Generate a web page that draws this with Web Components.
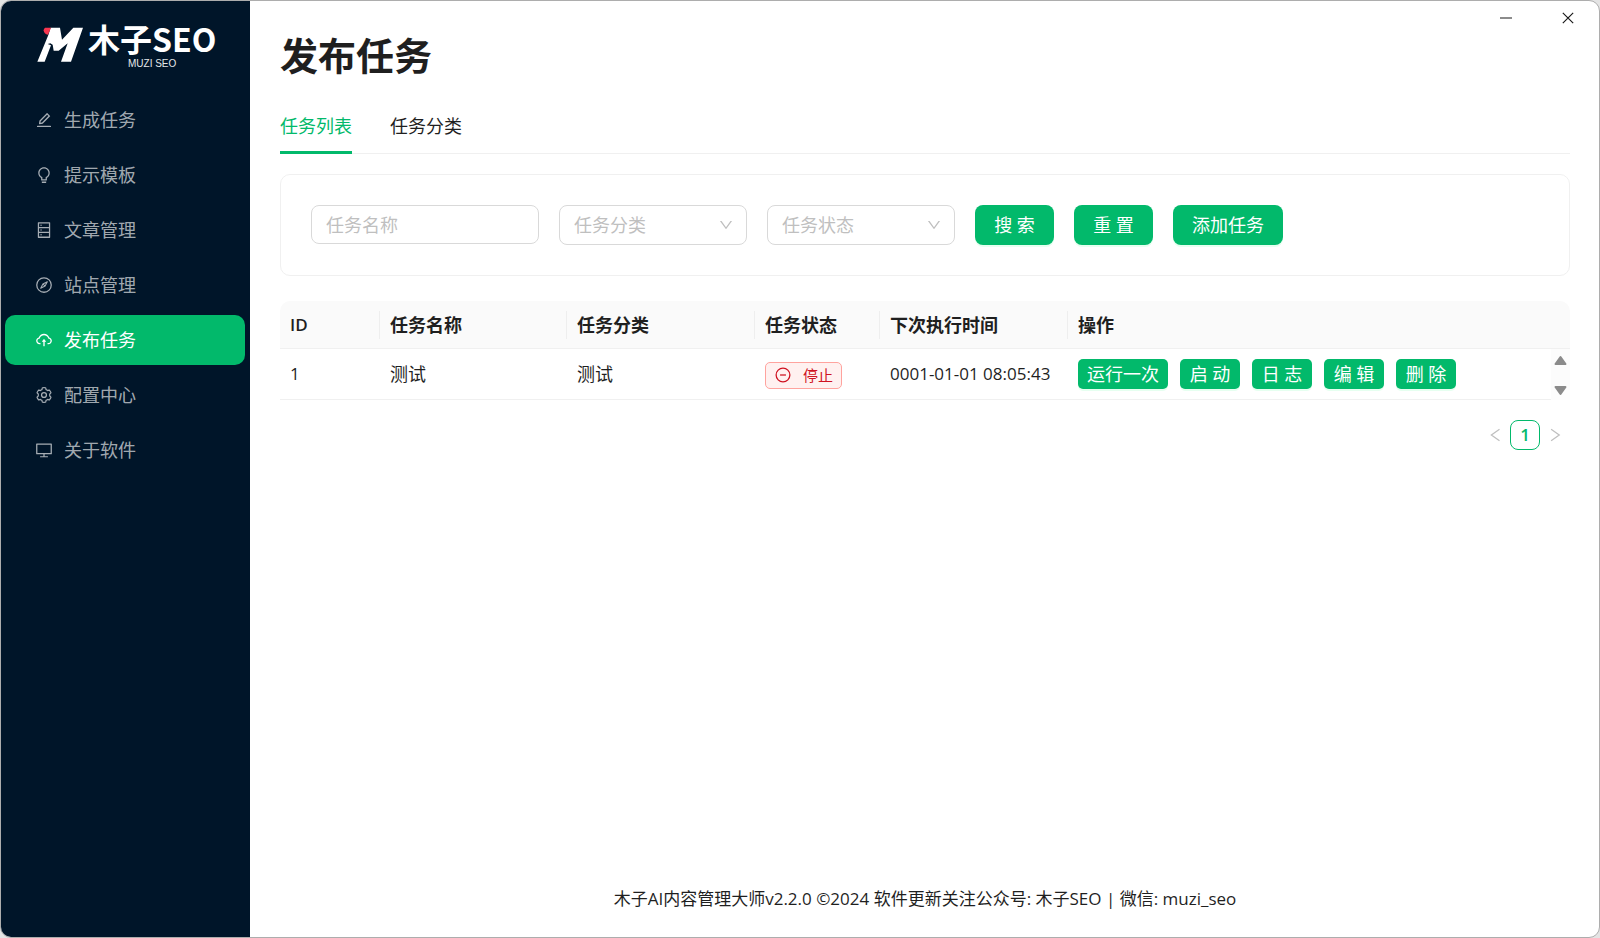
<!DOCTYPE html>
<html lang="zh-CN">
<head>
<meta charset="utf-8">
<title>发布任务</title>
<style>
  html, body { height: 100%; }
  body {
    margin: 0;
    background: #e4e4e4;
    font-family: "Open Sans", "Noto Sans CJK SC", sans-serif;
    font-size: 18px;
    line-height: 28px;
    color: #1f1f1f;
    --primary: #02b96b;
    --line: #f0f0f0;
    --field-line: #d9d9d9;
    --hint: #bfbfbf;
    --latin-size: 17px;
  }
</style>
</head>
<body>
<mz-window>
  <mz-sidebar slot="side">
    <mz-menu-item icon="edit">生成任务</mz-menu-item>
    <mz-menu-item icon="bulb">提示模板</mz-menu-item>
    <mz-menu-item icon="database">文章管理</mz-menu-item>
    <mz-menu-item icon="compass">站点管理</mz-menu-item>
    <mz-menu-item icon="upload" active>发布任务</mz-menu-item>
    <mz-menu-item icon="setting">配置中心</mz-menu-item>
    <mz-menu-item icon="desktop">关于软件</mz-menu-item>
  </mz-sidebar>
  <mz-title>发布任务</mz-title>
  <mz-tabs>
    <mz-tab active>任务列表</mz-tab>
    <mz-tab>任务分类</mz-tab>
  </mz-tabs>
  <mz-filter-card>
    <mz-input label="任务名称"></mz-input>
    <mz-select label="任务分类"></mz-select>
    <mz-select label="任务状态"></mz-select>
    <mz-button>搜 索</mz-button>
    <mz-button>重 置</mz-button>
    <mz-button>添加任务</mz-button>
  </mz-filter-card>
  <mz-task-table></mz-task-table>
  <mz-pagination></mz-pagination>
  <mz-footer slot="footer">木子AI内容管理大师v2.2.0 ©2024 软件更新关注公众号: 木子SEO | 微信: muzi_seo</mz-footer>
</mz-window>

<script>
const ICONS = {
  edit: '<path d="M257.7 752c2 0 4-.2 6-.5L431.9 722c2-.4 3.9-1.3 5.3-2.8l423.9-423.9a9.96 9.96 0 000-14.1L694.9 114.9c-1.9-1.9-4.4-2.9-7.1-2.9s-5.2 1-7.1 2.9L256.8 538.8c-1.5 1.5-2.4 3.3-2.8 5.3l-29.5 168.2a33.5 33.5 0 009.4 29.8c6.6 6.4 14.9 9.9 23.8 9.9zm67.4-174.4L687.8 215l73.3 73.3-362.7 362.6-88.9 15.7 15.6-89zM880 836H144c-17.7 0-32 14.3-32 32v36c0 4.4 3.6 8 8 8h784c4.4 0 8-3.6 8-8v-36c0-17.7-14.3-32-32-32z"/>',
  bulb: '<path d="M632 888H392c-4.4 0-8 3.6-8 8v32c0 17.7 14.3 32 32 32h192c17.7 0 32-14.3 32-32v-32c0-4.4-3.6-8-8-8zM512 64c-181.1 0-328 146.9-328 328 0 121.4 66 227.4 164 284.1V792c0 17.7 14.3 32 32 32h264c17.7 0 32-14.3 32-32V676.1c98-56.7 164-162.7 164-284.1 0-181.1-146.9-328-328-328zm127.9 549.8L604 634.6V752H420V634.6l-35.9-20.8C305.4 568.3 256 484.5 256 392c0-141.4 114.6-256 256-256s256 114.6 256 256c0 92.5-49.4 176.3-128.1 221.8z"/>',
  database: '<path d="M832 64H192c-17.7 0-32 14.3-32 32v832c0 17.7 14.3 32 32 32h640c17.7 0 32-14.3 32-32V96c0-17.7-14.3-32-32-32zm-600 72h560v208H232V136zm560 480H232V408h560v208zm0 272H232V680h560v208zM304 240a40 40 0 1080 0 40 40 0 10-80 0zm0 272a40 40 0 1080 0 40 40 0 10-80 0zm0 272a40 40 0 1080 0 40 40 0 10-80 0z"/>',
  compass: '<g fill="none" stroke="currentColor" stroke-width="72"><circle cx="512" cy="512" r="412"/><path stroke-width="60" stroke-linejoin="round" d="M700 324L450 450 324 700 574 574ZM450 450L574 574"/></g>',
  upload: '<path d="M518.3 459a8 8 0 00-12.6 0l-112 141.7a7.98 7.98 0 006.3 12.9h73.9V856c0 4.4 3.6 8 8 8h60c4.4 0 8-3.6 8-8V613.7H624c6.7 0 10.4-7.7 6.3-12.9L518.3 459z"/><path d="M811.4 366.7C765.6 245.9 648.9 160 512.2 160S258.8 245.8 213 366.6C127.3 389.1 64 467.2 64 560c0 110.5 89.5 200 199.9 200H304c4.4 0 8-3.6 8-8v-60c0-4.4-3.6-8-8-8h-40.1c-33.7 0-65.4-13.4-89-37.7-23.5-24.2-36-56.8-34.9-90.6.9-26.4 9.9-51.2 26.2-72.1 16.7-21.3 40.1-36.8 66.1-43.7l37.9-9.9 13.9-36.6c8.6-22.8 20.6-44.1 35.7-63.4a245.6 245.6 0 0152.4-49.9c41.1-28.9 89.5-44.2 140-44.2s98.9 15.3 140 44.2c19.9 14 37.5 30.8 52.4 49.9 15.1 19.3 27.1 40.7 35.7 63.4l13.8 36.5 37.8 10C846.1 454.5 884 503.8 884 560c0 33.1-12.9 64.3-36.3 87.7a123.07 123.07 0 01-87.6 36.3H720c-4.4 0-8 3.6-8 8v60c0 4.4 3.6 8 8 8h40.1C870.5 760 960 670.5 960 560c0-92.7-63.1-170.7-148.6-193.3z"/>',
  setting: '<g fill="none" stroke="currentColor" stroke-width="72"><path transform="translate(36 36) scale(.93)" d="M924.8 625.7l-65.5-56c3.1-19 4.7-38.4 4.7-57.8s-1.6-38.8-4.7-57.8l65.5-56a32.03 32.03 0 009.3-35.2l-.9-2.6a443.74 443.74 0 00-79.7-137.9l-1.8-2.1a32.12 32.12 0 00-35.1-9.5l-81.3 28.9c-30-24.6-63.5-44-99.7-57.6l-15.7-85a32.05 32.05 0 00-25.8-25.7l-2.7-.5c-52.1-9.4-106.9-9.4-159 0l-2.7.5a32.05 32.05 0 00-25.8 25.7l-15.8 85.4a351.86 351.86 0 00-99 57.4l-81.9-29.1a32 32 0 00-35.1 9.5l-1.8 2.1a446.02 446.02 0 00-79.7 137.9l-.9 2.6c-4.5 12.5-.8 26.5 9.3 35.2l66.3 56.6c-3.1 18.8-4.6 38-4.6 57.1 0 19.2 1.5 38.4 4.6 57.1L99 625.5a32.03 32.03 0 00-9.3 35.2l.9 2.6c18.1 50.4 44.9 96.9 79.7 137.9l1.8 2.1a32.12 32.12 0 0035.1 9.5l81.9-29.1c29.8 24.5 63.1 43.9 99 57.4l15.8 85.4a32.05 32.05 0 0025.8 25.7l2.7.5a449.4 449.4 0 00159 0l2.7-.5a32.05 32.05 0 0025.8-25.7l15.7-85a350 350 0 0099.7-57.6l81.3 28.9a32 32 0 0035.1-9.5l1.8-2.1c34.8-41.1 61.6-87.5 79.7-137.9l.9-2.6c4.5-12.3.8-26.3-9.3-35z"/><circle cx="512" cy="512" r="140"/></g>',
  desktop: '<path fill-rule="evenodd" d="M928 140H96c-18 0-32 14-32 32v552c0 18 14 32 32 32h380v112H304c-9 0-16 7-16 16v40h448v-40c0-9-7-16-16-16H548V756h380c18 0 32-14 32-32V172c0-18-14-32-32-32zM136 212h752v472H136z"/>',
  minus: '<g fill="none" stroke="currentColor" stroke-width="82"><circle cx="512" cy="512" r="440"/><path d="M324 512h376"/></g>',
  down: '<path d="M884 256h-75c-5.1 0-9.9 2.5-12.9 6.6L512 654.2 227.9 262.6c-3-4.1-7.8-6.6-12.9-6.6h-75c-6.5 0-10.3 7.4-6.5 12.7l352.6 486.1c12.8 17.6 39 17.6 51.7 0l352.6-486.1c3.9-5.3.1-12.7-6.4-12.7z"/>',
  left: '<path fill="none" stroke="currentColor" stroke-width="80" d="M800 150L280 512 800 874"/>',
  right: '<path fill="none" stroke="currentColor" stroke-width="80" d="M264 150L784 512 264 874"/>',
  minimize: '<path fill="none" stroke="currentColor" stroke-width="90" d="M0 512H1024"/>',
  close: '<path fill="none" stroke="currentColor" stroke-width="100" d="M70 70L954 954M954 70L70 954"/>'
};

function define(name, render) {
  customElements.define(name, class extends HTMLElement {
    connectedCallback() {
      if (this.shadowRoot) return;
      this.attachShadow({ mode: 'open' }).innerHTML = render(this);
    }
  });
}

define('mz-icon', el => `
  <style>
    :host { display: inline-flex; width: 18px; height: 18px; flex: none; }
    svg { width: 100%; height: 100%; display: block; fill: currentColor; }
  </style>
  <svg viewBox="0 0 1024 1024" aria-hidden="true">${ICONS[el.getAttribute('name')]}</svg>`);

define('mz-window', () => `
  <style>
    :host {
      display: grid; grid-template-columns: 249px minmax(0, 1fr);
      box-sizing: border-box; min-height: 100vh; position: relative;
      border: 1px solid #adadad; border-radius: 11px; overflow: hidden; background: #fff;
    }
    main { display: flex; flex-direction: column; padding: 31px 29px 24px 30px; min-width: 0; }
    footer { margin-top: auto; }
    .controls { position: absolute; top: 0; right: 0; display: flex; }
    .controls button {
      width: 62px; height: 34px; padding: 0; border: 0; background: none; color: #1a1a1a;
      display: flex; align-items: center; justify-content: center;
    }
    .controls mz-icon { width: 12px; height: 12px; }
  </style>
  <slot name="side"></slot>
  <main><slot></slot><footer><slot name="footer"></slot></footer></main>
  <div class="controls">
    <button aria-label="最小化"><mz-icon name="minimize"></mz-icon></button>
    <button aria-label="关闭"><mz-icon name="close"></mz-icon></button>
  </div>`);

define('mz-logo', () => `
  <style>
    :host { display: flex; gap: 4px; align-items: flex-start; color: #fff; }
    svg { width: 47px; height: 36px; flex: none; margin-top: 8px; }
    .words { display: flex; flex-direction: column; align-items: center; gap: 2px; }
    strong { font: 700 32px/38px "Noto Sans CJK SC", sans-serif; white-space: nowrap; }
    small { font: 10px/10px "Liberation Sans", sans-serif; color: #e4e7ea; }
  </style>
  <svg viewBox="110 82 141 108" aria-hidden="true">
    <path fill="#fff" d="M151 84h28l6 36 34-36h29l-36 102h-30l20-55-27 22h-15l-3-18-7-4-8 2 10 4-19 49h-22l33-80z"/>
    <path fill="#f8364f" d="M134 84h18l-9 21q-12-1-13-13 0-5 4-8z"/>
  </svg>
  <div class="words"><strong>木子SEO</strong><small>MUZI SEO</small></div>`);

define('mz-sidebar', () => `
  <style>
    :host { display: block; background: #001529; }
    mz-logo { height: 75px; padding: 18px 0 0 36px; box-sizing: border-box; }
    nav { display: flex; flex-direction: column; gap: 5px; padding: 19px 5px 0 4px; }
  </style>
  <mz-logo></mz-logo>
  <nav><slot></slot></nav>`);

define('mz-menu-item', el => `
  <style>
    :host { display: block; color: rgba(255, 255, 255, .65); }
    :host([active]) { color: #fff; }
    a {
      display: flex; align-items: center; gap: 11px; height: 50px; padding: 0 30px;
      border-radius: 10px; color: inherit; text-decoration: none;
    }
    :host([active]) a { background: var(--primary); }
  </style>
  <a href="#"><mz-icon name="${el.getAttribute('icon')}"></mz-icon><span><slot></slot></span></a>`);

define('mz-title', () => `
  <style>
    :host { display: block; margin-bottom: 21px; }
    h1 { margin: 0; font-size: 38px; line-height: 46px; font-weight: 700; }
  </style>
  <h1><slot></slot></h1>`);

define('mz-tabs', () => `
  <style>
    :host { display: block; margin-bottom: 20px; }
    div { display: flex; gap: 38px; box-shadow: inset 0 -1px var(--line); }
  </style>
  <div role="tablist"><slot></slot></div>`);

define('mz-tab', el => `
  <style>
    :host { display: block; }
    button {
      height: 55px; padding: 0 0 2px; border: 0; background: none; font: inherit; color: inherit;
    }
    :host([active]) button { color: var(--primary); box-shadow: inset 0 -3px var(--primary); }
  </style>
  <button role="tab" aria-selected="${el.hasAttribute('active')}"><slot></slot></button>`);

define('mz-filter-card', () => `
  <style>
    :host {
      display: flex; flex-wrap: wrap; gap: 20px; align-items: flex-start;
      padding: 30px; margin-bottom: 25px; border: 1px solid var(--line); border-radius: 10px;
    }
  </style>
  <slot></slot>`);

define('mz-input', el => `
  <style>
    :host { display: block; width: 228px; }
    input {
      box-sizing: border-box; width: 100%; height: 39px; padding: 0 14px; display: block;
      border: 1px solid var(--field-line); border-radius: 8px; font: inherit; color: inherit; background: #fff;
    }
    input::placeholder { color: var(--hint); opacity: 1; }
  </style>
  <input type="text" aria-label="${el.getAttribute('label')}" placeholder="${el.getAttribute('label')}">`);

define('mz-select', el => `
  <style>
    :host { display: grid; width: 188px; align-items: center; }
    select, mz-icon { grid-area: 1 / 1; }
    select {
      appearance: none; box-sizing: border-box; width: 100%; height: 40px; padding: 0 14px; margin: 0;
      border: 1px solid var(--field-line); border-radius: 8px; font: inherit; color: var(--hint); background: #fff;
    }
    mz-icon { width: 16px; height: 16px; justify-self: end; margin-right: 13px; color: var(--hint); pointer-events: none; }
  </style>
  <select aria-label="${el.getAttribute('label')}"><option>${el.getAttribute('label')}</option></select>
  <mz-icon name="down"></mz-icon>`);

define('mz-button', () => `
  <style>
    :host { display: block; }
    button {
      display: block; min-width: 79px; height: 40px; padding: 0 19px; border: 0; border-radius: 8px; white-space: nowrap;
      font: inherit; line-height: 28px; color: #fff; background: var(--primary);
      box-shadow: 0 2px 0 rgba(5, 255, 105, .1);
    }
    :host([small]) button { min-width: 60px; height: 30px; padding: 0 9px; border-radius: 5px; }
  </style>
  <button type="button"><slot></slot></button>`);

define('mz-tag', () => `
  <style>
    :host {
      display: inline-flex; align-items: center; gap: 12px; height: 25px; padding: 0 8px 0 9px; vertical-align: middle;
      border: 1px solid #ffa39e; border-radius: 5px; background: #fff1f0; color: #cf1322; font-size: 15px;
    }
    mz-icon { width: 16px; height: 16px; }
  </style>
  <mz-icon name="minus"></mz-icon><span><slot></slot></span>`);

define('mz-task-table', () => `
  <style>
    :host { display: block; position: relative; margin-bottom: 20px; }
    table { width: 100%; table-layout: fixed; border-collapse: separate; border-spacing: 0; }
    th, td { padding: 0 10px; text-align: left; border-bottom: 1px solid var(--line); white-space: nowrap; }
    th { height: 47px; background: #fafafa; font-weight: 700; }
    th:not(:last-child) {
      background: linear-gradient(#eee, #eee) right center / 1px 28px no-repeat #fafafa;
    }
    th:first-child { border-top-left-radius: 10px; font-weight: 600; font-size: var(--latin-size); }
    th:last-child { border-top-right-radius: 10px; }
    td { height: 50px; }
    .latin { font-size: var(--latin-size); }
    .id { width: 100px; } .name { width: 187px; } .kind { width: 188px; }
    .state { width: 125px; } .time { width: 188px; }
    .actions { display: flex; gap: 12px; }
    .scroll {
      position: absolute; right: 0; top: 48px; bottom: 0; width: 19px; background: #fcfcfc;
      display: flex; flex-direction: column; justify-content: space-between; align-items: center;
      box-sizing: border-box; padding: 6px 0 4px;
    }
    .scroll svg { width: 13px; height: 11px; fill: #8b8b8b; stroke: #8b8b8b; stroke-width: 2; stroke-linejoin: round; }
  </style>
  <table>
    <colgroup><col class="id"><col class="name"><col class="kind"><col class="state"><col class="time"><col></colgroup>
    <thead><tr><th>ID</th><th>任务名称</th><th>任务分类</th><th>任务状态</th><th>下次执行时间</th><th>操作</th></tr></thead>
    <tbody><tr>
      <td class="latin">1</td><td>测试</td><td>测试</td>
      <td><mz-tag>停止</mz-tag></td>
      <td class="latin">0001-01-01 08:05:43</td>
      <td><div class="actions">
        <mz-button small>运行一次</mz-button><mz-button small>启 动</mz-button><mz-button small>日 志</mz-button><mz-button small>编 辑</mz-button><mz-button small>删 除</mz-button>
      </div></td>
    </tr></tbody>
  </table>
  <div class="scroll" aria-hidden="true">
    <svg viewBox="0 0 13 11"><path d="M6.5 2L11.5 9H1.5Z"/></svg>
    <svg viewBox="0 0 13 11"><path d="M6.5 9L11.5 2H1.5Z"/></svg>
  </div>`);

define('mz-pagination', () => `
  <style>
    :host { display: block; }
    nav { display: flex; justify-content: flex-end; }
    button {
      width: 30px; height: 30px; padding: 0; border: 0; background: none; color: var(--hint); font: inherit;
      display: flex; align-items: center; justify-content: center;
    }
    .current { border: 1px solid var(--primary); border-radius: 8px; color: var(--primary); font-weight: 600; font-size: var(--latin-size); }
    mz-icon { width: 16px; height: 16px; }
  </style>
  <nav aria-label="分页">
    <button aria-label="上一页"><mz-icon name="left"></mz-icon></button>
    <button class="current">1</button>
    <button aria-label="下一页"><mz-icon name="right"></mz-icon></button>
  </nav>`);

define('mz-footer', () => `
  <style>
    :host { display: block; text-align: center; font-size: var(--latin-size); }
  </style>
  <slot></slot>`);
</script>
</body>
</html>
